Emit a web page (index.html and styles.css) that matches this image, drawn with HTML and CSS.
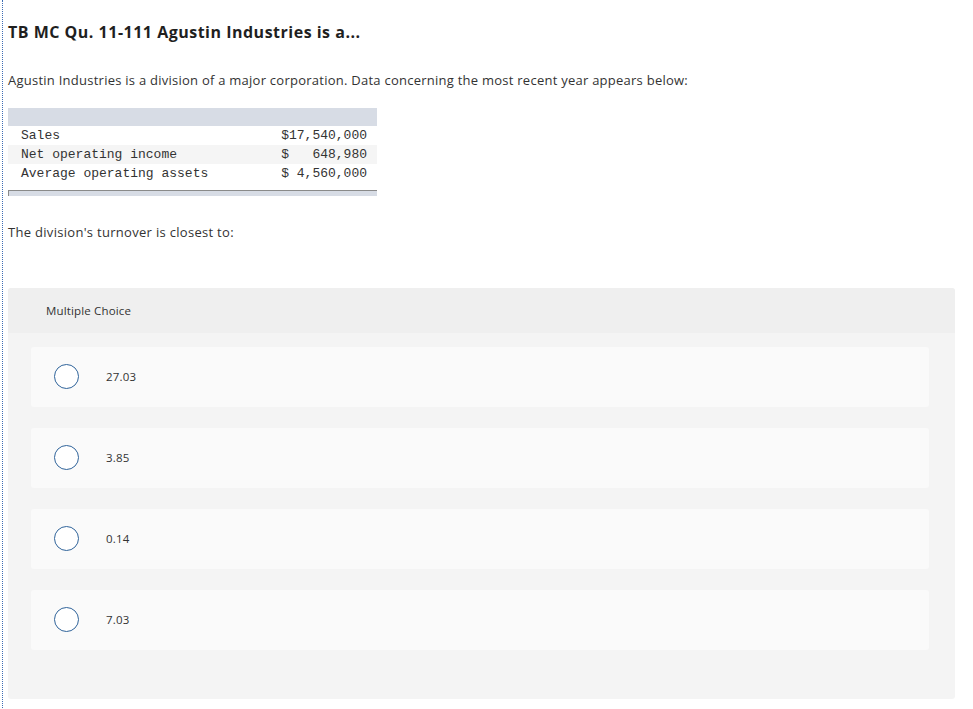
FILE: index.html
```html
<!DOCTYPE html>
<html>
<head>
<meta charset="utf-8">
<link rel="stylesheet" href="styles.css">
</head>
<body>
<div class="page">
  <h1 class="title">TB MC Qu. 11-111 Agustin Industries is a...</h1>
  <p class="intro">Agustin Industries is a division of a major corporation. Data concerning the most recent year appears below:</p>
  <div class="data">
    <div class="data-head"></div>
    <div class="row"><span>Sales</span><span>$17,540,000</span></div>
    <div class="row alt"><span>Net operating income</span><span>$&nbsp;&nbsp;&nbsp;648,980</span></div>
    <div class="row"><span>Average operating assets</span><span>$ 4,560,000</span></div>
    <div class="data-foot"></div>
  </div>
  <p class="question">The division's turnover is closest to:</p>
  <div class="mc">
    <div class="mc-head">Multiple Choice</div>
    <div class="mc-body">
      <div class="opt"><span class="radio"></span><span class="val">27.03</span></div>
      <div class="opt"><span class="radio"></span><span class="val">3.85</span></div>
      <div class="opt"><span class="radio"></span><span class="val">0.14</span></div>
      <div class="opt"><span class="radio"></span><span class="val">7.03</span></div>
    </div>
  </div>
</div>
</body>
</html>
```
FILE: styles.css
```css
html, body { margin: 0; padding: 0; background: #fff; }
body { font-family: "Open Sans", Lato, sans-serif; color: #222; }
.page {
  margin-left: 2px;
  border-left: 1px dotted #3d6db5;
  padding-left: 5px;
  padding-top: 1px;
  min-height: 708px;
  box-sizing: border-box;
  width: 953px;
}
.title {
  font-size: 16px;
  font-weight: 700;
  margin: 21px 0 0 0;
  line-height: 20px;
  color: #1f1f1f;
  letter-spacing: 0.5px;
}
.intro {
  font-size: 13px;
  margin: 29px 0 0 0;
  line-height: 18px;
  color: #333;
  letter-spacing: 0.25px;
}
.data {
  width: 369px;
  margin-top: 19px;
  font-family: "Liberation Mono", "DejaVu Sans Mono", monospace;
  font-size: 13px;
  color: #333;
}
.data-head { height: 18px; background: #d7dce5; }
.row {
  display: flex;
  justify-content: space-between;
  height: 19px;
  line-height: 20px;
  padding: 0 10px 0 13px;
}
.row.alt { background: #f5f5f5; }
.data-foot {
  margin-top: 7px;
  height: 5px;
  background: #d7dce5;
  border-top: 1px solid #8a8a8a;
  border-left: 1px solid #8a8a8a;
}
.question {
  font-size: 13px;
  margin: 27px 0 0 0;
  line-height: 18px;
  color: #333;
  letter-spacing: 0.3px;
}
.mc {
  margin-top: 47px;
  width: 947px;
  background: #f4f4f4;
  border-radius: 3px;
  overflow: hidden;
}
.mc-head {
  height: 45px;
  line-height: 45px;
  background: #efefef;
  padding-left: 38px;
  font-size: 11.5px;
  color: #333;
  letter-spacing: 0.15px;
}
.mc-body {
  display: flex;
  flex-direction: column;
  gap: 21.5px;
  padding: 14px 26px 49px 23px;
}
.opt {
  height: 59.5px;
  background: #fafafa;
  border-radius: 3px;
  display: flex;
  align-items: center;
  padding-left: 23px;
}
.radio {
  width: 23px;
  height: 23px;
  border: 1px solid #2f639a;
  border-radius: 50%;
  background: #fff;
  flex: none;
}
.val {
  margin-left: 27px;
  font-size: 11.5px;
  color: #333;
  letter-spacing: 0.2px;
}
```
